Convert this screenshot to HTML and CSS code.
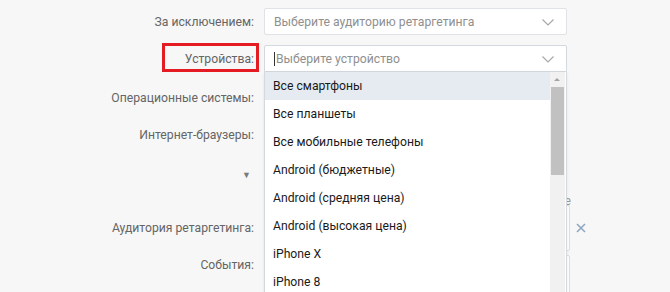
FILE: index.html
```html
<!DOCTYPE html>
<html lang="ru">
<head>
<meta charset="utf-8">
<link rel="stylesheet" href="styles.css">
</head>
<body>
<div class="form">
  <div class="row r1">
    <div class="label">За исключением:</div>
    <div class="select">
      <span class="ph">Выберите аудиторию ретаргетинга</span>
      <svg class="chev" width="12" height="7" viewBox="0 0 12 7"><path d="M0.5 0.5 L6 6 L11.5 0.5" fill="none" stroke="#a8a8a8" stroke-width="1.2"/></svg>
    </div>
  </div>
  <div class="row r2">
    <div class="label">Устройства:</div>
    <div class="select open">
      <span class="caret"></span><span class="ph">Выберите устройство</span>
      <svg class="chev" width="12" height="7" viewBox="0 0 12 7"><path d="M0.5 0.5 L6 6 L11.5 0.5" fill="none" stroke="#a8a8a8" stroke-width="1.2"/></svg>
    </div>
    <div class="highlight"></div>
    <ul class="dropdown">
      <li class="active">Все смартфоны</li>
      <li>Все планшеты</li>
      <li>Все мобильные телефоны</li>
      <li>Android (бюджетные)</li>
      <li>Android (средняя цена)</li>
      <li>Android (высокая цена)</li>
      <li>iPhone X</li>
      <li>iPhone 8</li>
      <div class="scrollbar"><span class="up"></span><span class="thumb"></span></div>
    </ul>
  </div>
  <div class="row r3">
    <div class="label">Операционные системы:</div>
    <div class="field"></div>
  </div>
  <div class="row r4">
    <div class="label">Интернет-браузеры:</div>
    <div class="field"></div>
  </div>
  <div class="row r5">
    <div class="label"><span class="tri">&#9660;</span></div>
    <div class="field"></div>
  </div>
  <div class="row r6">
    <div class="label"></div>
    <div class="field note">Показывать только новые</div>
  </div>
  <div class="row r7">
    <div class="label">Аудитория ретаргетинга:</div>
    <div class="input tall"></div>
    <svg class="remove" width="10" height="10" viewBox="0 0 10 10"><path d="M1 1 L9 9 M9 1 L1 9" stroke="#8fa6c1" stroke-width="1.6"/></svg>
  </div>
  <div class="row r8">
    <div class="label">События:</div>
    <div class="input"></div>
  </div>
</div>
</body>
</html>
```
FILE: styles.css
```css
html, body {
  margin: 0;
  padding: 0;
  background: #f7f7f7;
  font-family: Roboto, "Liberation Sans", Arial, sans-serif;
  font-size: 12.2px;
  overflow: hidden;
  height: 292px;
}
.form {
  padding-top: 8px;
  display: flex;
  flex-direction: column;
}
.row {
  display: flex;
  align-items: center;
  position: relative;
}
.label {
  width: 264px;
  text-align: right;
  color: #656565;
  padding-right: 10px;
  box-sizing: border-box;
  flex: none;
}
.select {
  width: 303px;
  height: 27px;
  box-sizing: border-box;
  background: #fff;
  border: 1px solid #dfe2e6;
  border-radius: 2px;
  display: flex;
  align-items: center;
  padding-left: 9px;
  position: relative;
}
.select.open {
  border-radius: 2px 2px 0 0;
  border-color: #d3d9de;
}
.ph {
  color: #8f8f8f;
}
.caret {
  width: 1px;
  height: 14px;
  background: #333;
  margin-right: 1px;
}
.chev {
  position: absolute;
  right: 12px;
  top: 10px;
}
.r1 { height: 27px; }
.r2 { height: 27px; margin-top: 10px; }
.r3 { height: 27px; margin-top: 12px; }
.r4 { height: 27px; margin-top: 10px; }
.r5 { height: 27px; margin-top: 12px; }
.r6 { height: 14px; margin-top: 7px; }
.r7 { height: 46px; margin-top: -3px; align-items: center; }
.r8 { height: 36px; margin-top: 4px; align-items: flex-start; }
.r8 .label { padding-top: 3px; }
.field { width: 303px; height: 27px; }
.note {
  width: 307px;
  height: 14px;
  text-align: right;
  color: #9a9a9a;
  line-height: 14px;
}
.input {
  width: 306px;
  height: 46px;
  box-sizing: border-box;
  border: 1px solid #dcdfe3;
  border-radius: 2px;
  background: #fff;
}
.r8 .input { height: 40px; }
.remove {
  margin-left: 6px;
}
.tri {
  color: #7b7b7b;
  font-size: 9px;
  padding-right: 3px;
}
.highlight {
  position: absolute;
  left: 162px;
  top: -2px;
  width: 97px;
  height: 29px;
  box-sizing: border-box;
  border: 3px solid #e41b23;
}
.dropdown {
  position: absolute;
  left: 264px;
  top: 27px;
  width: 303px;
  box-sizing: border-box;
  margin: 0;
  padding: 0;
  list-style: none;
  background: #fff;
  border: 1px solid #d3d9de;
  border-top: none;
  z-index: 5;
  box-shadow: 0 1px 3px rgba(0,0,0,0.08);
}
.dropdown li {
  height: 28px;
  line-height: 28px;
  padding-left: 8px;
  color: #1a1a1a;
}
.dropdown li.active {
  background: #e5ebf1;
  margin-right: 15px;
}
.scrollbar {
  position: absolute;
  right: 1px;
  top: 0;
  bottom: 0;
  width: 15px;
  background: #f1f1f1;
}
.scrollbar .up {
  position: absolute;
  left: 4px;
  top: 6px;
  width: 0;
  height: 0;
  border-left: 3px solid transparent;
  border-right: 3px solid transparent;
  border-bottom: 3px solid #a3a3a3;
}
.scrollbar .thumb {
  position: absolute;
  left: 1px;
  width: 13px;
  top: 15px;
  height: 88px;
  background: #c1c1c1;
}
```
